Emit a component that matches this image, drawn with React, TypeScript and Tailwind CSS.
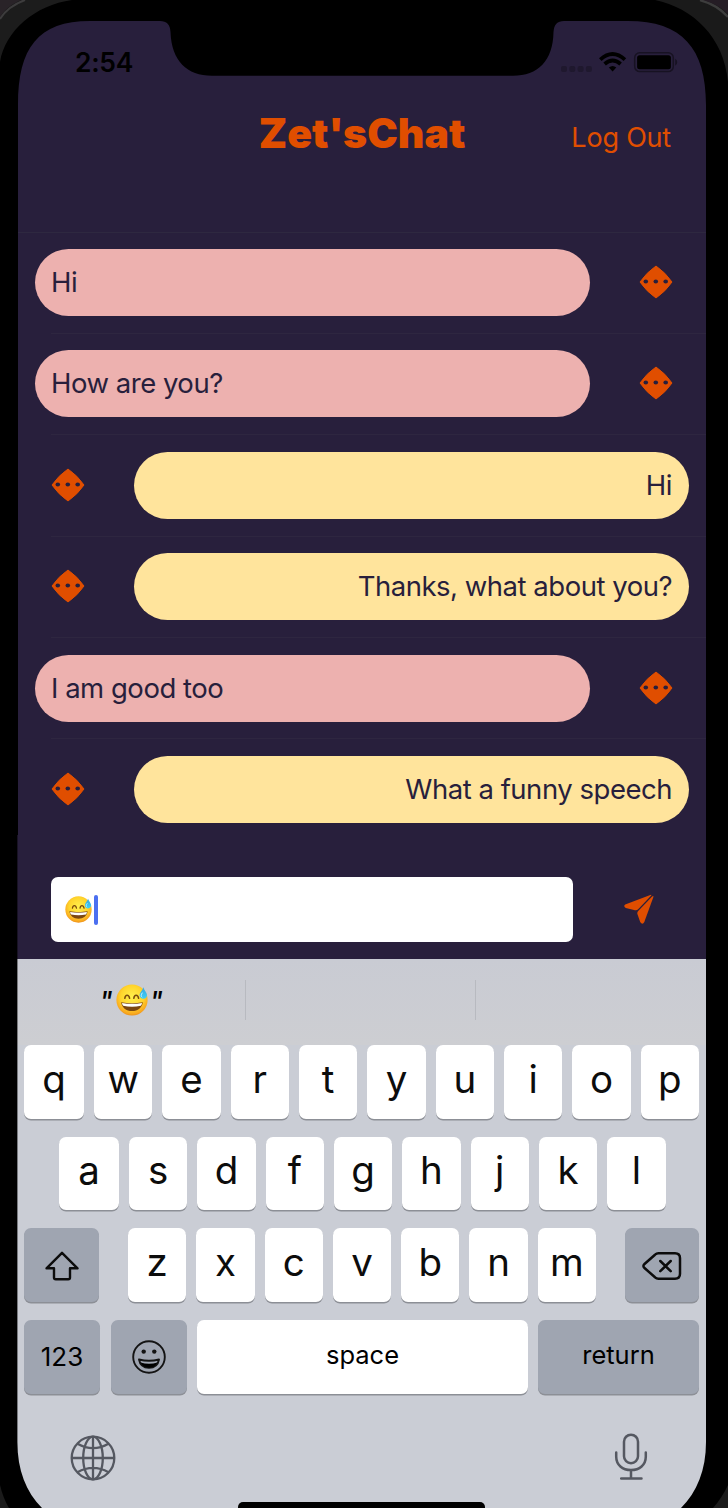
import React from "react";

type Message = { text: string; mine: boolean };

const messages: Message[] = [
  { text: "Hi", mine: false },
  { text: "How are you?", mine: false },
  { text: "Hi", mine: true },
  { text: "Thanks, what about you?", mine: true },
  { text: "I am good too", mine: false },
  { text: "What a funny speech", mine: true },
];

function SweatSmile({ className }: { className: string }) {
  return (
    <svg viewBox="0 0 32 32" className={className} role="img" aria-label="😅">
      <defs>
        <radialGradient id="face" cx="0.5" cy="0.4" r="0.6">
          <stop offset="0" stopColor="#fff04d" />
          <stop offset="0.6" stopColor="#ffd52c" />
          <stop offset="0.9" stopColor="#f9a91f" />
          <stop offset="1" stopColor="#ec911b" />
        </radialGradient>
        <linearGradient id="drop" x1="0" y1="0" x2="0" y2="1">
          <stop offset="0" stopColor="#35a4e0" />
          <stop offset="1" stopColor="#3fd0f8" />
        </linearGradient>
      </defs>
      <circle cx="16" cy="16" r="15.6" fill="url(#face)" />
      <path d="M8.8 14.3c.6-4 4-4 4.8 0M17.8 14.3c.6-4 4-4 4.8 0" fill="none" stroke="#7a4a0c" strokeWidth="1.5" strokeLinecap="round" />
      <path d="M5.2 18.2c7 1.3 14.6 1.3 21.6 0c-.5 5.3-5 8.8-10.8 8.8S5.7 23.5 5.2 18.2z" fill="#7b4711" />
      <path d="M6 18.9c6.5 1.2 13.5 1.2 20 0c-.2 1.3-.6 2.1-1.2 2.9c-5.5 1.2-12 1.2-17.6 0c-.6-.8-1-1.6-1.2-2.9z" fill="#fff" />
      <path d="M27.3 3.2c.8 3 3.9 5.7 3.7 8.2c-.2 2.1-1.9 3.5-4.1 3.3c-2.2-.2-3.6-2-3.3-4.1c.3-2.5 2.9-4.2 3.7-7.4z" fill="url(#drop)" />
      <path d="M26.2 9c-1.4 1.9-1.3 3.2-.3 4" fill="none" stroke="#c8f4ff" strokeWidth="1" strokeLinecap="round" />
    </svg>
  );
}

function Diamond() {
  return (
    <svg viewBox="0 0 34 34" className="-mt-px h-[34px] w-[34px] shrink-0">
      <path d="M17 1Q26.500 7.500 33 17Q26.500 26.500 17 33Q7.500 26.500 1 17Q7.500 7.500 17 1Z" fill="#e04e00" stroke="#e04e00" strokeWidth="1" strokeLinejoin="round" />
      <g fill="#281f3c">
        <ellipse cx="6.8" cy="16.5" rx="2.3" ry="2" />
        <ellipse cx="16.8" cy="16.5" rx="2.3" ry="2" />
        <ellipse cx="26.7" cy="16.5" rx="2.3" ry="2" />
      </g>
    </svg>
  );
}

function MessageRow({ text, mine, last }: Message & { last: boolean }) {
  return (
    <div className="flex h-[101.4px] flex-col">
      <div className={`flex flex-1 items-center justify-between ${mine ? "flex-row-reverse pr-[17px] pl-[33px]" : "pr-[33px] pl-[17px]"}`}>
        <div
          className={`flex h-[67px] w-[555px] items-center rounded-full pr-[17px] pl-[16px] text-[27.5px] whitespace-nowrap text-[#281f3c] ${
            mine ? "justify-end bg-[#ffe49c]" : "bg-[#edb1af]"
          }`}
        >
          <span className="tracking-[-0.48px]">{text}</span>
        </div>
        <Diamond />
      </div>
      <div className={`ml-[33px] h-px ${last ? "" : "bg-[#2e2640]"}`} />
    </div>
  );
}

function Key({ children, className = "flex-1 bg-white" }: { children: React.ReactNode; className?: string }) {
  return (
    <div className={`flex h-[73.5px] items-center justify-center rounded-[7px] text-black shadow-[0_1.5px_0_#8c8f96] ${className}`}>
      {children}
    </div>
  );
}

function Letter({ value, first }: { value: string; first?: boolean }) {
  return (
    <Key className={first ? "w-[60px] shrink-0 bg-white" : "min-w-0 flex-1 bg-white"}>
      <span className="-mt-[6px] text-[38.5px] leading-none font-normal text-[#0c0c0c]">{value}</span>
    </Key>
  );
}

function StatusIcons() {
  return (
    <svg viewBox="0 0 120 26" className="h-[26px] w-[120px]">
      <g fill="#1f182e">
        <rect x="3" y="15" width="6" height="6" rx="2" />
        <rect x="11.3" y="15" width="6" height="6" rx="2" />
        <rect x="19.6" y="15" width="6" height="6" rx="2" />
        <rect x="27.9" y="15" width="6" height="6" rx="2" />
      </g>
      <g fill="none" stroke="#000" strokeWidth="3.8">
        <path d="M42.3 8.6Q54.600 -2.500 66.900 8.600" />
        <path d="M46.600 13Q54.600 6.100 62.600 13" />
      </g>
      <path d="M50.900 16.600Q54.600 13.300 58.300 16.600L54.600 20.600Z" fill="#000" />
      <rect x="76.700" y="1.800" width="38.6" height="18.8" rx="5" fill="none" stroke="#171222" strokeWidth="1.5" />
      <rect x="79.100" y="4.200" width="33.8" height="14" rx="2.5" fill="#000" />
      <path d="M117.200 7.700q2.2 1 2 3.5q.2 2.5-2 3.5z" fill="#171222" />
    </svg>
  );
}

function Bezel() {
  return (
    <svg viewBox="0 0 728 1508" className="pointer-events-none absolute inset-0 h-full w-full">
      <path
        fillRule="evenodd"
        fill="#000"
        d="M0 0H728V1508H0Z M18 105C18 48 38 21 90 21H160Q170 21 170.5 32C171.5 61 187 75.7 212 75.7H513C538 75.7 553 61 553.5 32Q554 21 564 21H628C682 21 706 48 706 105V1442C706 1470 697 1492 681 1508H42C26 1492 17.4 1470 17.4 1442V835H18Z"
      />
      <path d="M0 0H72C35 5 5 31 0 62Z" fill="#1c1c1c" />
      <path d="M0 19C6 9 14 4 25 0" fill="none" stroke="#3d3c3d" strokeWidth="2" />
      <path d="M0 0H21C12 4 5 9 0 17Z" fill="#292328" />
      <path d="M728 0H655C693 8 724 37 728 82Z" fill="#1a1a1a" />
      <path d="M700 0C711 3 721 9 728 17" fill="none" stroke="#3d3d3d" strokeWidth="2.5" />
      <path d="M703 0H728V14C721 7 713 3 703 0Z" fill="#251d25" />
      <path d="M0 1485Q3 1498 9 1508H0Z M728 1485Q722 1498 713 1508H728Z" fill="#1b1b1b" />
    </svg>
  );
}

export default function App() {
  return (
    <div className="relative flex h-[1508px] w-[728px] flex-col overflow-hidden bg-[#281f3c] pt-[21px] pr-[22px] pl-[18px] font-['Inter','Liberation_Sans',sans-serif]">
      <div className="flex h-[212px] shrink-0 flex-col border-b border-[#2e2840]">
        <div className="flex h-[56px] items-end justify-between pr-[28px] pl-[57px]">
          <span className="text-[26.5px] leading-[30px] font-semibold tracking-[-0.3px] text-black">2:54</span>
          <StatusIcons />
        </div>
        <div className="grid grid-cols-[1fr_auto_1fr] items-end pt-[31px] text-[#e04e00]">
          <div />
          <h1 className="text-[41px] leading-[50px] font-black">Zet'sChat</h1>
          <span className="pr-[35px] text-right text-[27px] leading-[40px] tracking-[-0.2px]">Log Out</span>
        </div>
      </div>

      <div className="-mt-[0.6px] flex h-[609.6px] shrink-0 flex-col">
        {messages.map((m, i) => (
          <MessageRow key={i} {...m} last={i === messages.length - 1} />
        ))}
      </div>

      <div className="flex h-[117px] shrink-0 items-start justify-between pt-[35px] pr-[52px] pl-[33px]">
        <div className="flex h-[65px] w-[522px] items-center rounded-[7px] bg-white pl-[14px]">
          <SweatSmile className="h-[27px] w-[27px]" />
          <div className="ml-[2px] h-[30px] w-[3.5px] rounded-full bg-[#4b6ff0]" />
        </div>
        <svg viewBox="0 0 30 30" className="mt-[17px] h-[30px] w-[30px]" fill="#e04e00">
          <path d="M1.2 10.6L26.3 .9Q28.2 .3 26.8 2L14.4 14.9Q12.9 16.6 11 16.2L1.8 14Q-1 12.3 1.2 10.6Z" />
          <path d="M28.1 2.5Q29.9 1 29.3 3.3L20.3 27.9Q18.5 31.5 16.2 28L13.4 20Q13 18.3 14.2 17Z" />
        </svg>
      </div>

      <div className="-ml-px flex flex-1 flex-col bg-[#cacdd5]">
        <div className="flex h-[86px] shrink-0 items-start bg-linear-to-b from-[#c9cbd3] to-[#cdced2] pt-[21px]">
          <div className="flex h-[40px] w-[229px] items-center justify-center border-r-[1.5px] border-[#b8bac0] text-[27px] font-medium italic">
            <span className="mt-[4px]">"</span>
            <SweatSmile className="mr-[2px] ml-[3px] h-[32px] w-[32px]" />
            <span className="mt-[4px]">"</span>
          </div>
          <div className="h-[40px] w-[230px] border-r-[1.5px] border-[#b8bac0]" />
        </div>

        <div className="flex flex-col gap-[18.2px] px-[7px]">
          <div className="flex gap-[10px]">
            {"qwertyuiop".split("").map((c, i) => (
              <Letter key={c} value={c} first={i === 0} />
            ))}
          </div>
          <div className="flex gap-[10px] pr-[33.5px] pl-[35px]">
            {"asdfghjkl".split("").map((c, i) => (
              <Letter key={c} value={c} first={i === 0} />
            ))}
          </div>
          <div className="flex justify-between">
            <Key className="w-[75px] bg-[#9fa5b1]">
              <svg viewBox="0 0 34 30" className="mt-[2px] h-[30px] w-[34px]" fill="none" stroke="#0c0c0c" strokeWidth="2.4" strokeLinejoin="round">
                <path d="M17 1.8L32.5 17.3H25V26.5Q25 28.3 23.2 28.3H10.8Q9 28.3 9 26.5V17.3H1.5Z" />
              </svg>
            </Key>
            <div className="flex w-[468px] gap-[10px]">
              {"zxcvbnm".split("").map((c) => (
                <Letter key={c} value={c} />
              ))}
            </div>
            <Key className="w-[74px] bg-[#9fa5b1]">
              <svg viewBox="0 0 40 30" className="mt-[2px] h-[30px] w-[40px]" fill="none" stroke="#0c0c0c" strokeWidth="2.5" strokeLinecap="round" strokeLinejoin="round">
                <path d="M16.5 2.3H33Q38 2.3 38 7.3V22.7Q38 27.7 33 27.7H16.5Q14.5 27.7 13 26.3L2.5 17Q.3 15 2.5 13L13 3.7Q14.5 2.3 16.5 2.3Z" />
                <path d="M18.3 10L28.7 20.2M28.7 10L18.3 20.2" />
              </svg>
            </Key>
          </div>
          <div className="flex">
            <Key className="w-[76px] bg-[#9fa5b1]">
              <span className="text-[26px]">123</span>
            </Key>
            <Key className="ml-[11px] w-[76px] bg-[#9fa5b1]">
              <svg viewBox="0 0 34 34" className="h-[34px] w-[34px]" fill="none" stroke="#141414" strokeWidth="1.9">
                <circle cx="17" cy="17" r="15.8" />
                <circle cx="11.7" cy="11.6" r="2.2" fill="#141414" stroke="none" />
                <circle cx="22.3" cy="11.6" r="2.2" fill="#141414" stroke="none" />
                <path d="M7 19.5Q17 22 27 19.5Q25.5 27.7 17 27.7T7 19.5Z" strokeLinejoin="round" />
                <path d="M8.5 22.5Q17 25 25.5 22.5Q23 27.7 17 27.7T8.5 22.5Z" fill="#000" stroke="none" />
              </svg>
            </Key>
            <Key className="ml-[10px] w-[331px] bg-white">
              <span className="-mt-[3px] text-[25.5px]">space</span>
            </Key>
            <Key className="ml-[10px] flex-1 bg-[#9fa5b1]">
              <span className="-mt-[3px] text-[25.5px]">return</span>
            </Key>
          </div>
        </div>

        <div className="flex items-start justify-between pt-[39px] pr-[58px] pl-[53px]">
          <svg viewBox="0 0 46 46" className="mt-[2px] h-[46px] w-[46px]" fill="none" stroke="#555861" strokeWidth="2.3">
            <circle cx="23" cy="23" r="21.3" />
            <ellipse cx="23" cy="23" rx="9.8" ry="21.3" />
            <path d="M23 1.7V44.3M1.7 23H44.3M7.5 8.8Q23 17.5 38.5 8.8M7.5 37.2Q23 28.5 38.5 37.2" />
          </svg>
          <svg viewBox="0 0 34 48" className="h-[48px] w-[34px]" fill="none" stroke="#555861" strokeWidth="2.5" strokeLinecap="round">
            <rect x="10" y="1.7" width="14" height="28.5" rx="7" />
            <path d="M2.2 19.5V23.5C2.2 32 8.5 37 17 37S31.8 32 31.8 23.5V19.5M17 37V45.5M7.2 45.5H27.5" />
          </svg>
        </div>
      </div>

      <Bezel />
      <div className="absolute bottom-0 left-[238px] h-[6px] w-[247px] rounded-t-[5px] bg-black" />
    </div>
  );
}
